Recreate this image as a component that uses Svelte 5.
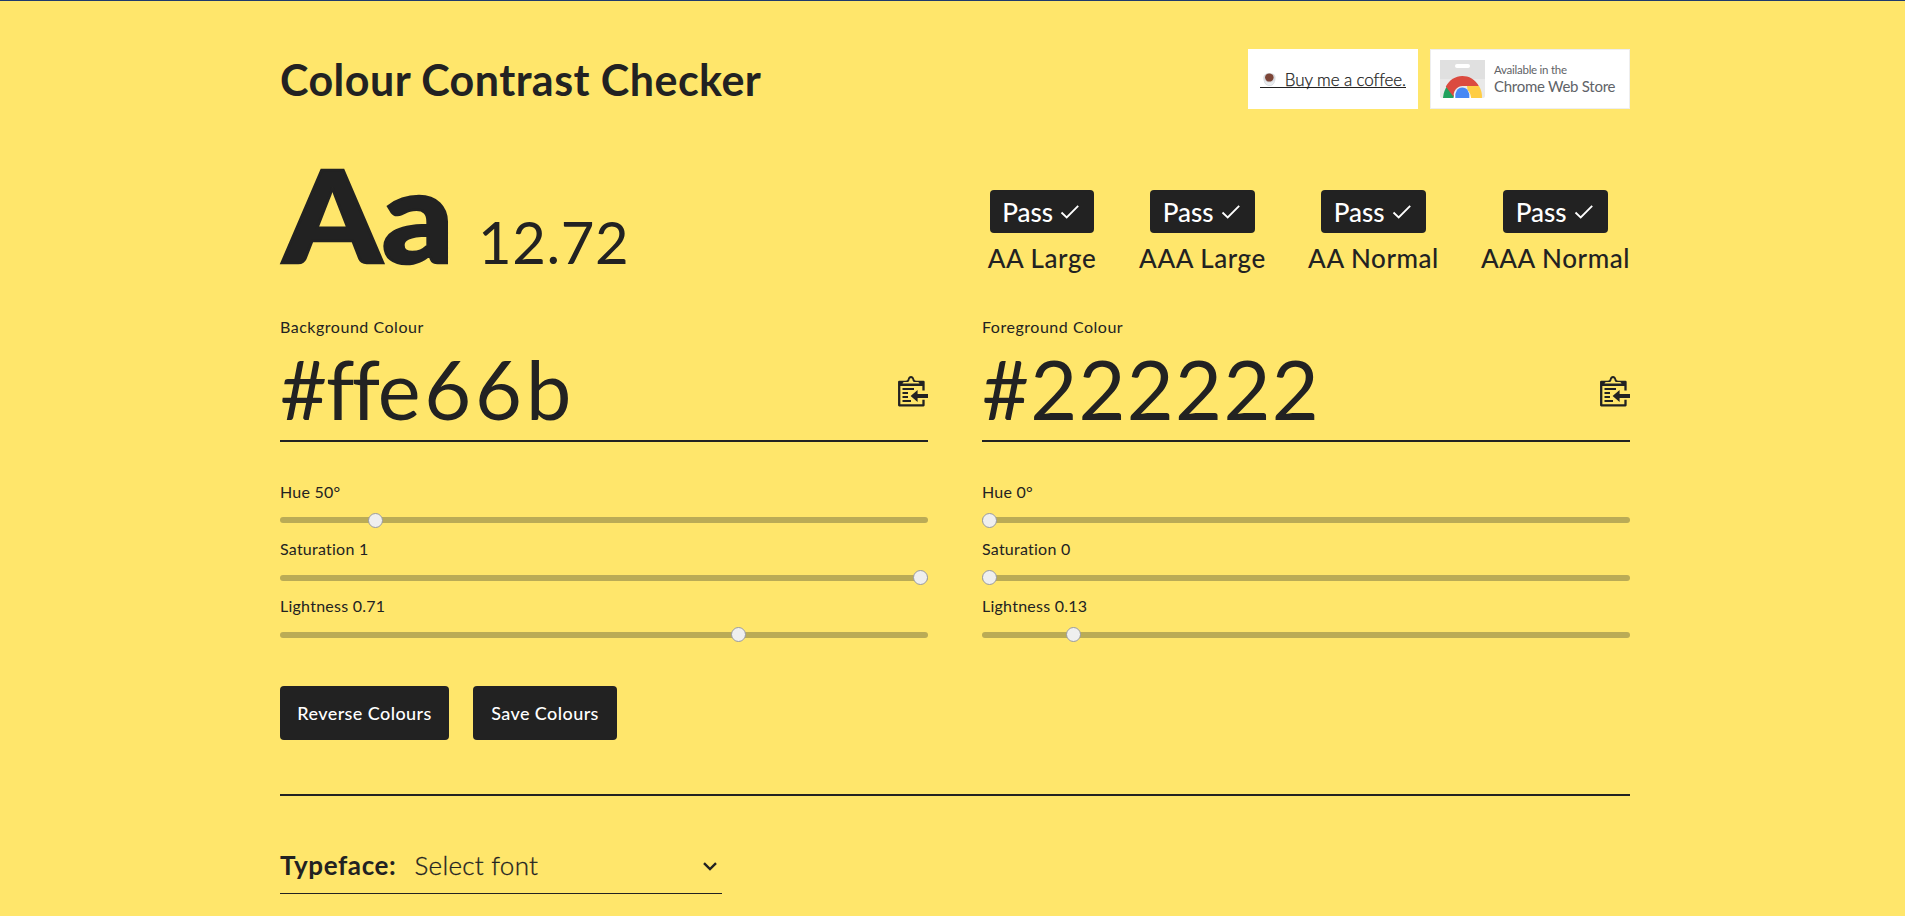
<script>
  const grades = [
    { name: 'AA Large', width: 108 },
    { name: 'AAA Large', width: 127 },
    { name: 'AA Normal', width: 129 },
    { name: 'AAA Normal', width: 149 }
  ];

  const colours = [
    {
      id: 'background',
      label: 'Background Colour',
      hex: ['#', 'ff', 'e66b'],
      sliders: [
        { label: 'Hue 50°', max: 360, value: 50 },
        { label: 'Saturation 1', max: 1, value: 1 },
        { label: 'Lightness 0.71', max: 1, value: 0.7118 }
      ]
    },
    {
      id: 'foreground',
      label: 'Foreground Colour',
      hex: ['#222222'],
      sliders: [
        { label: 'Hue 0°', max: 360, value: 0 },
        { label: 'Saturation 0', max: 1, value: 0 },
        { label: 'Lightness 0.13', max: 1, value: 0.1333 }
      ]
    }
  ];
</script>

<main>
  <div class="page">
    <header>
      <h1>Colour Contrast Checker</h1>
      <div class="links">
        <div class="coffee">
          <span class="link">
            <svg class="cup" width="17" height="17" viewBox="0 0 17 17">
              <path d="M1.500 6.500C1.500 3 4.500 1 8.500 1s7 2 7 5.400c0 4.700-2.500 9.600-7 9.600s-7-4.800-7-9.500z" fill="#d9dce0" />
              <path d="M2.500 9c.7 3.500 2.700 6 6 6s5.300-2.500 6-6c-1.400 2.200-3.500 3-6 3s-4.600-.8-6-3z" fill="#eceef0" />
              <ellipse cx="8.400" cy="6.200" rx="4.900" ry="4.700" fill="#7c4537" />
            </svg>
            <span>Buy me a coffee.</span>
          </span>
        </div>
        <div class="store">
          <svg width="45" height="38" viewBox="0 0 45 38">
            <path d="M0 0h45v36a2 2 0 0 1-2 2H2a2 2 0 0 1-2-2z" fill="#e9e9e9" />
            <path d="M0 0h45v19H0z" fill="#e0e0e0" />
            <rect x="15" y="4" width="15" height="4" rx="2" fill="#fff" />
            <path d="M3 38a19.500 21.500 0 0 1 5-13l7 13z" fill="#1fa15d" />
            <path d="M5.800 26.500a19.300 21.500 0 0 1 33-.5H22.500a9 9 0 0 0-8.500 11.500z" fill="#db4a3f" />
            <path d="M27 26h12a19.500 21 0 0 1 3 12H29z" fill="#ffcd43" />
            <path d="M13.500 38a8.800 9.500 0 1 1 17.600 0z" fill="#fff" />
            <path d="M15.300 38a7.200 8.500 0 1 1 14 0z" fill="#4788f4" />
          </svg>
          <div class="store-text">
            <span class="small">Available in the</span>
            <span class="big">Chrome Web Store</span>
          </div>
        </div>
      </div>
    </header>

    <section class="result">
      <div class="score">
        <span class="sample">Aa</span>
        <span class="ratio">12.72</span>
      </div>
      <div class="grades">
        {#each grades as grade}
          <div class="grade" style="width: {grade.width}px">
            <div class="badge">
              <span>Pass</span>
              <svg width="20" height="16" viewBox="0 0 20 16" fill="none" stroke="#fff" stroke-width="1.800">
                <path d="M1.500 8.500l5.200 5L18.200 1.800" />
              </svg>
            </div>
            <span class="grade-name">{grade.name}</span>
          </div>
        {/each}
      </div>
    </section>

    <section class="colours">
      {#each colours as colour}
        <div class="colour">
          <div class="caption">{colour.label}</div>
          <div class="field">
            <span class="hex {colour.id}">{#each colour.hex as part}<span class="part">{part}</span>{/each}</span>
            <svg class="paste" width="30" height="31" viewBox="0 0 30 31" fill="none" stroke="#222">
              <path d="M25.500 14.500V6H1.200v23.300h24.300v-5.500" stroke-width="2.300" stroke-linejoin="round" />
              <path d="M1 5h6.500c1.500 0 2-.8 2.300-2C10.300 1 11.500 0 13 0s2.700 1 3.200 3c.3 1.200.8 2 2.300 2H26v5H1z" fill="#222" stroke="none" />
              <path d="M4.500 7.600c.4-1.200 1.200-1.500 2.500-1.500h2c1.600 0 2.300-.9 2.500-2.300.1-1 .6-1.600 1.500-1.600s1.400.6 1.500 1.600c.2 1.400.9 2.300 2.500 2.300h2c1.300 0 2.100.3 2.500 1.500z" fill="#ffe66b" stroke="none" />
              <path d="M4.500 13h11.500M4.500 17h5.500M4.500 21h5.500M4.500 25h8.500" stroke-width="1.900" />
              <path d="M12.600 20l7-6v4.100H30v4H19.600V26z" fill="#222" stroke="none" />
            </svg>
          </div>
          <div class="sliders">
            {#each colour.sliders as slider}
              <div class="slider">
                <span>{slider.label}</span>
                <input type="range" min="0" max={slider.max} step="any" value={slider.value} aria-label={slider.label} />
              </div>
            {/each}
          </div>
        </div>
      {/each}
    </section>

    <div class="actions">
      <button class="reverse">Reverse Colours</button>
      <button class="save">Save Colours</button>
    </div>

    <hr />

    <div class="typeface">
      <strong>Typeface:</strong>
      <span class="choice">Select font</span>
      <svg class="chevron" width="14" height="9" viewBox="0 0 14 9" fill="none" stroke="#222" stroke-width="2.400">
        <path d="M1 1.200l6 5.800 6-5.800" />
      </svg>
    </div>
  </div>
</main>

<style>
  :global(body) {
    margin: 0;
    background: #ffe66b;
    overflow: hidden;
  }

  main {
    box-sizing: border-box;
    min-height: 916px;
    border-top: 1px solid #1f3a6e;
    background: #ffe66b;
    color: #222;
    font-family: Lato, sans-serif;
  }

  .page {
    width: 1350px;
    margin-left: 280px;
    padding-top: 48px;
  }

  header {
    display: flex;
    justify-content: space-between;
    height: 60px;
  }

  h1 {
    margin: 0;
    font-size: 43px;
    font-weight: 700;
    line-height: 62px;
    letter-spacing: 0.46px;
  }

  .links {
    display: flex;
    gap: 12px;
  }

  .coffee,
  .store {
    box-sizing: border-box;
    display: flex;
    align-items: center;
    height: 60px;
    background: #fff;
  }

  .coffee {
    width: 170px;
    padding-left: 12px;
  }

  .link {
    display: flex;
    align-items: center;
    width: 146px;
    height: 17px;
    border-bottom: 1px solid #222;
    font-size: 17px;
    font-weight: 300;
    line-height: 17px;
    letter-spacing: -0.1px;
    white-space: nowrap;
    -webkit-text-stroke: 0.25px #222;
  }

  .link span {
    padding-top: 2px;
  }

  .cup {
    margin: 2px 8px 0 2px;
  }

  .store {
    width: 200px;
    padding-left: 9px;
    border: 1px solid #eee;
    color: #5f6368;
  }

  .store-text {
    display: flex;
    flex-direction: column;
    margin: -1px 0 0 9px;
    white-space: nowrap;
  }

  .small {
    font-size: 11.5px;
    line-height: 14px;
    letter-spacing: -0.26px;
  }

  .big {
    font-size: 15px;
    line-height: 18px;
    letter-spacing: -0.27px;
  }

  .result {
    display: flex;
    justify-content: space-between;
    height: 110px;
    margin-top: 50px;
  }

  .score {
    display: flex;
    align-items: baseline;
  }

  .sample {
    width: 198px;
    font-size: 128px;
    font-weight: 900;
    line-height: 112px;
    -webkit-text-stroke: 2.5px #222;
    transform: translate(3px, -1px) scaleX(1.1);
    transform-origin: left;
  }

  .ratio {
    font-size: 58px;
    letter-spacing: 0.6px;
    line-height: 60px;
  }

  .grades {
    display: flex;
    gap: 43px;
    padding-top: 31px;
  }

  .grade {
    display: flex;
    flex-direction: column;
    align-items: center;
    gap: 9px;
    font-size: 26px;
    font-weight: 500;
    white-space: nowrap;
  }

  .badge {
    box-sizing: border-box;
    display: flex;
    align-items: center;
    gap: 7px;
    width: 104.5px;
    height: 43px;
    padding-left: 12.5px;
    border-radius: 4px;
    background: #222;
    color: #fff;
    line-height: 44px;
  }

  .grade-name {
    line-height: 33px;
    letter-spacing: 0.57px;
  }

  .colours {
    display: grid;
    grid-template-columns: 1fr 1fr;
    gap: 54px;
    margin-top: 48px;
  }

  .caption {
    font-size: 16px;
    line-height: 20px;
    letter-spacing: 0.52px;
  }

  .field {
    display: flex;
    align-items: center;
    justify-content: space-between;
    margin-top: 7px;
    padding-bottom: 6px;
    border-bottom: 2px solid #222;
  }

  .hex {
    font-size: 81px;
    line-height: 90px;
    letter-spacing: 1.3px;
  }

  .background .part {
    letter-spacing: -1px;
  }

  .background .part:nth-child(2) {
    letter-spacing: -2.5px;
  }

  .background .part:nth-child(3) {
    letter-spacing: 3.8px;
  }

  .paste {
    margin-top: 4px;
  }

  .sliders {
    height: 204px;
    margin-top: 40px;
  }

  .slider {
    height: 57.2px;
    font-size: 16px;
    line-height: 20px;
    letter-spacing: 0.24px;
  }

  .slider span {
    display: block;
  }

  .slider input {
    display: block;
    appearance: none;
    width: 100%;
    height: 6px;
    margin: 15.4px 0 0;
    border-radius: 3px;
    background: #baab56;
  }

  .slider input::-webkit-slider-thumb {
    appearance: none;
    box-sizing: border-box;
    width: 15px;
    height: 15px;
    border: 1px solid #999ba0;
    border-radius: 50%;
    background: #efefef;
  }

  .actions {
    display: flex;
    gap: 24px;
  }

  button {
    height: 54px;
    padding: 0;
    border: 0;
    border-radius: 4px;
    background: #222;
    color: #fff;
    font: 500 18px/54px Lato, sans-serif;
    letter-spacing: 0.42px;
  }

  .reverse {
    width: 169px;
  }

  .save {
    width: 144px;
  }

  hr {
    height: 2px;
    margin: 54px 0 49px;
    border: 0;
    background: #222;
  }

  .typeface {
    box-sizing: border-box;
    display: flex;
    align-items: center;
    width: 442px;
    height: 49px;
    padding: 0 5px 7px 0;
    border-bottom: 1px solid #222;
    font-size: 26px;
    line-height: 41px;
  }

  .typeface strong {
    width: 134.5px;
    font-weight: 700;
    letter-spacing: 0.6px;
  }

  .choice {
    flex: 1;
    font-weight: 300;
    letter-spacing: 0.27px;
    -webkit-text-stroke: 0.3px #222;
  }

  .chevron {
    margin-top: 2px;
  }
</style>
